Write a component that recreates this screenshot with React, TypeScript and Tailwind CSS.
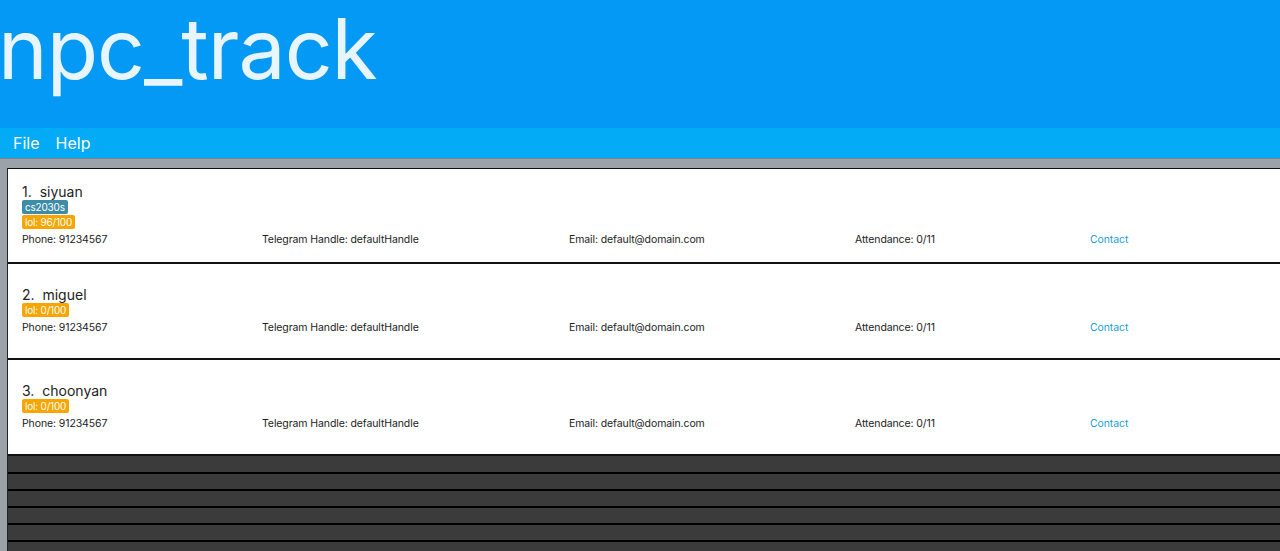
export default function App() {
  const people = [
    { name: "siyuan", tags: [{ label: "cs2030s", color: "bg-[#3d8ca8]" }, { label: "lol: 96/100", color: "bg-[#f7a500]" }] },
    { name: "miguel", tags: [{ label: "lol: 0/100", color: "bg-[#f7a500]" }] },
    { name: "choonyan", tags: [{ label: "lol: 0/100", color: "bg-[#f7a500]" }] },
  ];

  return (
    <div className="h-[551px] w-[1280px] overflow-hidden bg-[#9ca2aa] font-['Inter',sans-serif]">
      <div className="flex h-[128px] items-start bg-[#0499f5]">
        <h1 className="ml-[-2px] mt-[1px] text-[84px] leading-[96px] font-normal tracking-[-1px] text-[#e8f5fe]">
          npc_track
        </h1>
      </div>
      <div className="flex h-[30px] items-center gap-[16px] bg-[#03aaf5] px-[13px] text-[16px] text-white">
        <span>File</span>
        <span>Help</span>
      </div>
      <div className="border-t border-[#7d8288] pt-[9px] pl-[7px]">
        <div className="border-l border-[#222] bg-[#3a3a3a]">
          {people.map((p, i) => (
            <div
              key={p.name}
              className={`flex flex-col justify-center border-b-2 border-[#111] bg-white px-[14px] ${i === 0 ? "h-[96px] border-t" : "h-[96px]"}`}
            >
              <div className="text-[14px] leading-[17px] text-[#222]">
                {i + 1}.&nbsp; {p.name}
              </div>
              <div className="flex flex-col items-start gap-[1px]">
                {p.tags.map((t) => (
                  <span key={t.label} className={`${t.color} rounded-[2px] px-[3px] text-[10px] leading-[14px] tracking-[-0.2px] text-white`}>
                    {t.label}
                  </span>
                ))}
              </div>
              <div className="mt-[3px] flex text-[10.5px] leading-[16px] tracking-[-0.1px] text-[#222]">
                <span className="w-[240px]">Phone: 91234567</span>
                <span className="w-[307px]">Telegram Handle: defaultHandle</span>
                <span className="w-[286px]">Email: default@domain.com</span>
                <span className="w-[235px]">Attendance: 0/11</span>
                <span className="text-[#1a9fdb]">Contact</span>
              </div>
            </div>
          ))}
          <div className="h-[1px] bg-[#3b3b3b]" />
          {[0, 1, 2, 3, 4, 5].map((k) => (
            <div key={k} className="h-[17px] border-b-2 border-black bg-[#3b3b3b]" />
          ))}
        </div>
      </div>
    </div>
  );
}
